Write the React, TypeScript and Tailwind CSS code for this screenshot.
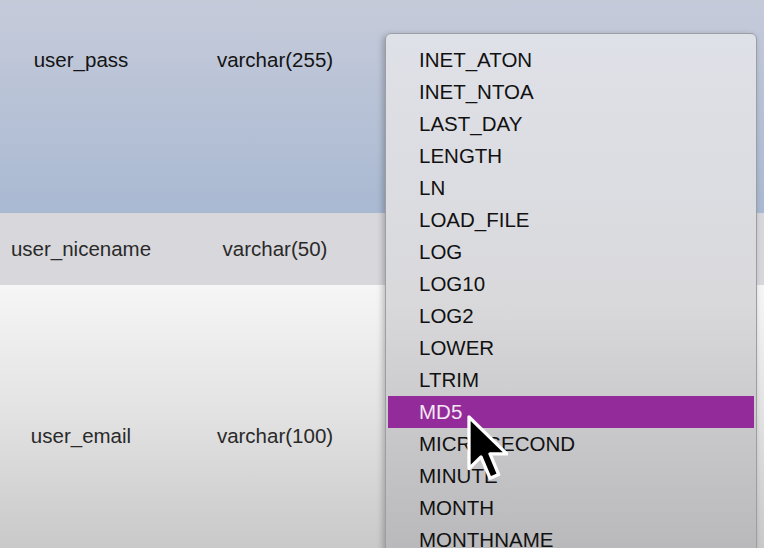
const functions = [
  'INET_ATON',
  'INET_NTOA',
  'LAST_DAY',
  'LENGTH',
  'LN',
  'LOAD_FILE',
  'LOG',
  'LOG10',
  'LOG2',
  'LOWER',
  'LTRIM',
  'MD5',
  'MICROSECOND',
  'MINUTE',
  'MONTH',
  'MONTHNAME',
];

const selected = 'MD5';

function Cursor() {
  return (
    <svg
      className="absolute left-[466px] top-[414px] pointer-events-none"
      width="42"
      height="72"
      viewBox="0 0 14 24"
    >
      <path
        d="M1 1 L1 18.2 L5 14.3 L8 21.4 L10.9 20.2 L8 13.3 L13.6 13.3 Z"
        fill="#000"
        stroke="#fff"
        strokeWidth="1.1"
        strokeLinejoin="round"
      />
    </svg>
  );
}

function Dropdown() {
  return (
    <div className="absolute left-[385px] top-[33px] w-[372px] h-[540px] rounded-[6px] border border-[#9c9ea4] bg-gradient-to-b from-[#dfe1e8] via-[#d9d9dc] to-[#b6b6b8] shadow-[-2px_2px_6px_rgba(0,0,0,0.25)] overflow-hidden">
      <ul className="pt-[10px] px-[2px]">
        {functions.map((fn) => (
          <li
            key={fn}
            className={
              fn === selected
                ? 'h-[32px] flex items-center pl-[31px] bg-[#932c9a] text-[#f4e8f4]'
                : 'h-[32px] flex items-center pl-[31px] text-[#111]'
            }
          >
            {fn}
          </li>
        ))}
      </ul>
    </div>
  );
}

export default function App() {
  return (
    <div className="relative w-[764px] h-[548px] overflow-hidden font-['Liberation_Sans',Arial,sans-serif] text-[20.5px]">
      {/* table rows */}
      <div className="flex flex-col">
        <div className="h-[213px] flex items-start pt-[45px] bg-gradient-to-b from-[#c6cbda] to-[#a9b9d2] text-[#141414]">
          <div className="w-[162px] text-center">user_pass</div>
          <div className="w-[226px] text-center">varchar(255)</div>
        </div>
        <div className="h-[72px] flex items-center bg-[#d8d7db] text-[#2a2a2a]">
          <div className="w-[162px] text-center">user_nicename</div>
          <div className="w-[226px] text-center">varchar(50)</div>
        </div>
        <div className="h-[263px] flex items-start pt-[136px] bg-gradient-to-b from-[#f6f6f6] via-[#e2e2e2] to-[#c9c9c9] text-[#2a2a2a]">
          <div className="w-[162px] text-center">user_email</div>
          <div className="w-[226px] text-center">varchar(100)</div>
        </div>
      </div>

      <Dropdown />
      <Cursor />
    </div>
  );
}
